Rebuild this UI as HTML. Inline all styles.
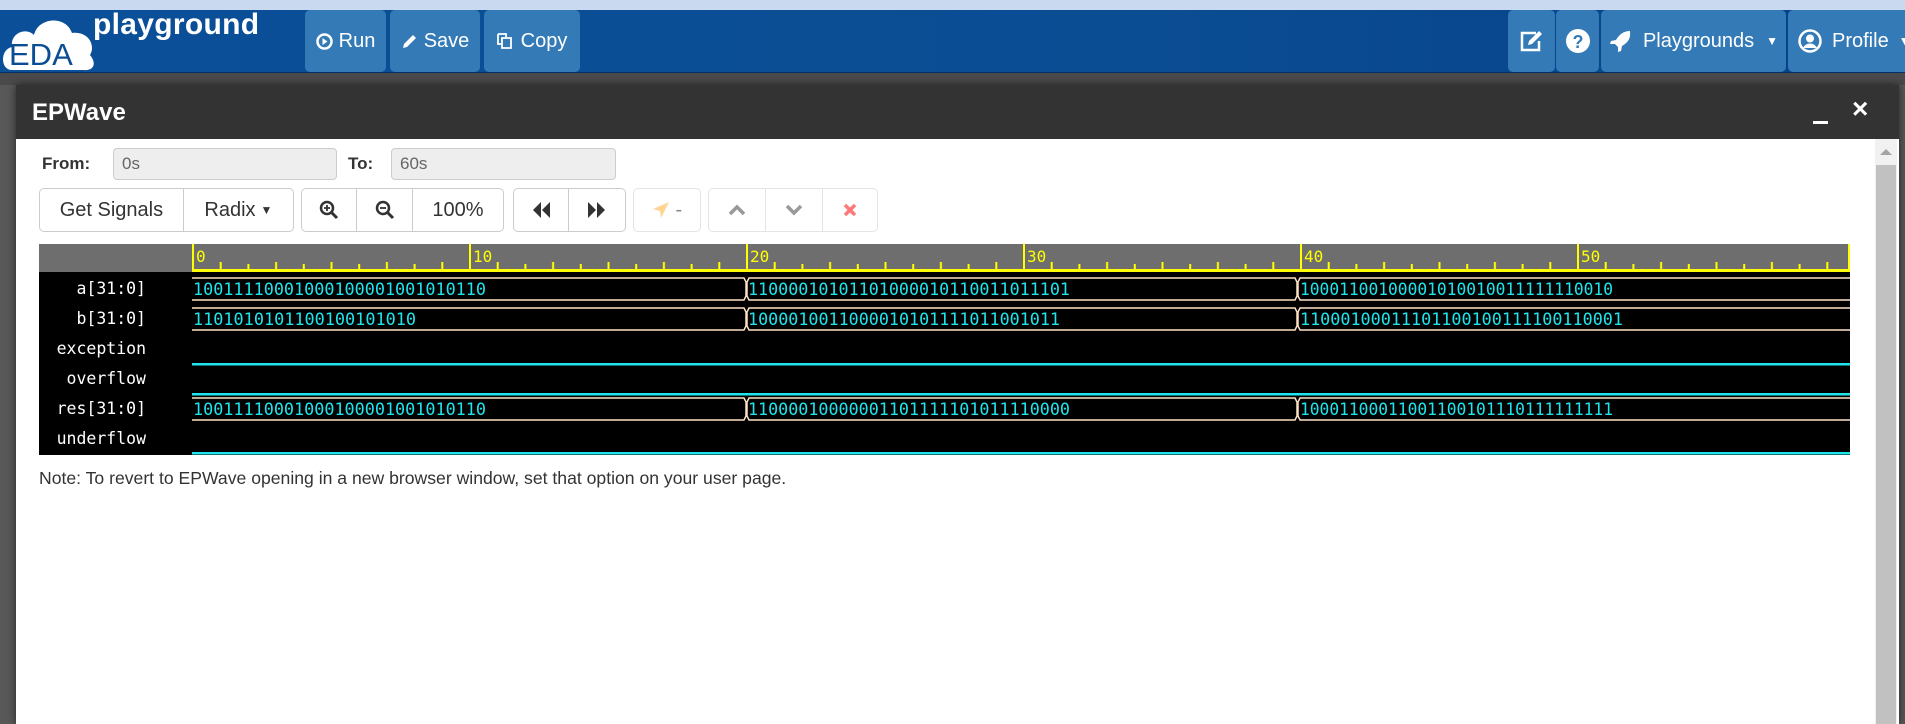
<!DOCTYPE html>
<html><head><meta charset="utf-8">
<style>
*{margin:0;padding:0;box-sizing:border-box}
body{width:1905px;height:724px;overflow:hidden;background:#585858;font-family:"Liberation Sans",sans-serif;position:relative}
.top{position:absolute;left:0;top:0;width:1905px;height:10px;background:#c9daf0}
.hdr{position:absolute;left:0;top:10px;width:1905px;height:63px;background:linear-gradient(90deg,#0a4f98,#0b4d93 60%,#064189);border-bottom:1px solid #03306a}
.nb{position:absolute;top:0;height:62px;background:#337ab7;border-radius:5px;color:#fff;font-size:20px;display:flex;align-items:center;justify-content:center;gap:6px}
.modal{position:absolute;left:16px;top:85px;width:1883px;height:639px;background:#fff;box-shadow:0 0 8px rgba(0,0,0,.6)}
.tbar{position:absolute;left:0;top:0;width:100%;height:54px;background:#333;color:#fff}
.lbl{position:absolute;font-weight:bold;font-size:17px;color:#333}
.inp{position:absolute;height:32px;background:#eee;border:1px solid #ccc;border-radius:4px;color:#666;font-size:17px;padding:5px 8px}
.grp{position:absolute;top:103px;height:44px;border:1px solid #ccc;border-radius:5px;display:flex;background:#fff}
.grp div{display:flex;align-items:center;justify-content:center;font-size:20px;color:#333;border-right:1px solid #ccc;height:100%}
.grp div:last-child{border-right:none}
.dis{border-color:#e4e4e4}.dis div{border-right-color:#e4e4e4}
</style></head><body>
<div class="top"></div>
<div class="hdr">
 <svg style="position:absolute;left:2px;top:1px" width="96" height="60" viewBox="0 0 96 60">
  <path d="M10 59 C-2 59 -2 38 10 36 C8 22 24 16 32 24 C36 6 64 4 70 22 C86 20 94 34 88 44 C96 54 90 60 82 59 Z" fill="#fff"/>
  <text x="7" y="54" font-family="Liberation Sans" font-size="31" fill="#0b4d93">EDA</text>
 </svg>
 <div style="position:absolute;left:93px;top:-2px;color:#fff;font-weight:bold;font-size:30px;letter-spacing:0.3px">playground</div>
 <div class="nb" style="left:305px;width:81px"><svg width="17" height="17"><circle cx="8.5" cy="8.5" r="7" fill="none" stroke="#fff" stroke-width="2.5"/><path d="M6.5 5v7l5-3.5z" fill="#fff"/></svg>Run</div>
 <div class="nb" style="left:390px;width:90px"><svg width="17" height="17"><path d="M2 15l1-4 9-9 3 3-9 9z" fill="#fff"/></svg>Save</div>
 <div class="nb" style="left:484px;width:96px"><svg width="18" height="18"><path d="M1 2h8v3M5 6h9v10H5z M1 2v10h4" fill="none" stroke="#fff" stroke-width="1.8"/></svg>Copy</div>
 <div class="nb" style="left:1508px;width:47px"><svg width="26" height="24"><path d="M17 4H3v17h17V12" fill="none" stroke="#fff" stroke-width="2.5"/><path d="M9 16l1-4 10-10 3 3-10 10z" fill="#fff"/></svg></div>
 <div class="nb" style="left:1556px;width:43px"><svg width="26" height="26"><circle cx="13" cy="13" r="12" fill="#fff"/><text x="13" y="20" text-anchor="middle" font-family="Liberation Sans" font-weight="bold" font-size="18" fill="#337ab7">?</text></svg></div>
 <div class="nb" style="left:1601px;width:185px;gap:12px"><svg width="22" height="22"><path d="M21 1c-7 0-11 4-14 9l-5 1-1 3 5 0 3 3 0 5 3-1 1-5c5-3 9-7 8-14z" fill="#fff"/></svg>Playgrounds <span style="font-size:12px">▼</span></div>
 <div class="nb" style="left:1788px;width:130px;justify-content:flex-start;padding-left:10px;gap:10px"><svg width="24" height="24"><circle cx="12" cy="12" r="10.5" fill="none" stroke="#fff" stroke-width="2.5"/><circle cx="12" cy="9.5" r="4" fill="#fff"/><path d="M5 19c3-6 11-6 14 0" fill="#fff"/></svg>Profile <span style="font-size:12px">▼</span></div>
</div>
<div style="position:absolute;left:0;top:73px;width:1905px;height:12px;background:#4a4a4a"></div>
<div class="modal">
 <div class="tbar">
  <div style="position:absolute;left:16px;top:14px;font-weight:bold;font-size:24px">EPWave</div>
  <div style="position:absolute;left:1797px;top:36px;width:15px;height:3px;background:#fff"></div>
  <div style="position:absolute;left:1836px;top:8px;font-size:28px;font-weight:bold">×</div>
 </div>
 <div style="position:absolute;left:1859px;top:54px;width:22px;height:585px;background:#f1f1f1"></div>
 <div style="position:absolute;left:1860px;top:80px;width:20px;height:559px;background:#c1c1c1"></div>
 <div style="position:absolute;left:1864px;top:64px;width:0;height:0;border-left:6px solid transparent;border-right:6px solid transparent;border-bottom:6px solid #a3a3a3"></div>
 <div class="lbl" style="left:26px;top:69px">From:</div>
 <div class="inp" style="left:97px;top:63px;width:224px">0s</div>
 <div class="lbl" style="left:332px;top:69px">To:</div>
 <div class="inp" style="left:375px;top:63px;width:225px">60s</div>
 <div class="grp" style="left:23px;width:255px"><div style="width:145px">Get Signals</div><div style="width:110px">Radix <span style="font-size:12px;margin-left:5px">▼</span></div></div>
 <div class="grp" style="left:285px;width:203px">
  <div style="width:56px"><svg width="20" height="20"><circle cx="8" cy="8" r="6" fill="none" stroke="#333" stroke-width="2.5"/><path d="M12 12l6 6" stroke="#333" stroke-width="3"/><path d="M5 8h6M8 5v6" stroke="#333" stroke-width="1.8"/></svg></div>
  <div style="width:56px"><svg width="20" height="20"><circle cx="8" cy="8" r="6" fill="none" stroke="#333" stroke-width="2.5"/><path d="M12 12l6 6" stroke="#333" stroke-width="3"/><path d="M5 8h6" stroke="#333" stroke-width="1.8"/></svg></div>
  <div style="width:91px">100%</div></div>
 <div class="grp" style="left:497px;width:113px">
  <div style="width:56px"><svg width="20" height="16"><path d="M10 0v16L2 8zM19 0v16L11 8z" fill="#333"/></svg></div>
  <div style="width:57px"><svg width="20" height="16"><path d="M1 0v16l8-8zM10 0v16l8-8z" fill="#333"/></svg></div></div>
 <div class="grp dis" style="left:617px;width:68px"><div style="width:68px;color:#888"><svg width="18" height="18"><path d="M17 1L1 8l7 2 1 7z" fill="#ffd591"/></svg>&nbsp;-</div></div>
 <div class="grp dis" style="left:692px;width:170px">
  <div style="width:58px"><svg width="18" height="12"><path d="M2 10l7-7 7 7" fill="none" stroke="#999" stroke-width="3.5"/></svg></div>
  <div style="width:57px"><svg width="18" height="12"><path d="M2 2l7 7 7-7" fill="none" stroke="#999" stroke-width="3.5"/></svg></div>
  <div style="width:55px"><svg width="14" height="14"><path d="M2 2l10 10M12 2L2 12" stroke="#f77" stroke-width="3.5"/></svg></div></div>
 <svg style="position:absolute;left:23px;top:159px" width="1811" height="211">
  <defs>
   <pattern id="tk" x="153" y="0" width="55.4" height="28" patternUnits="userSpaceOnUse">
    <rect x="27.7" y="18" width="2" height="8" fill="#ff0"/><rect x="0" y="20" width="2" height="6" fill="#ff0"/>
   </pattern>
  </defs>
  <rect x="0" y="0" width="1811" height="28" fill="#6e6e6e"/>
  <rect x="153" y="0" width="1658" height="28" fill="url(#tk)"/>
  <rect x="153" y="25" width="1658" height="3" fill="#ff0"/>
  <g fill="#ff0"><rect x="153" y="0" width="2" height="28"/><rect x="430" y="0" width="2" height="28"/><rect x="707" y="0" width="2" height="28"/><rect x="984" y="0" width="2" height="28"/><rect x="1261" y="0" width="2" height="28"/><rect x="1538" y="0" width="2" height="28"/><rect x="1809" y="0" width="2" height="28"/></g>
  <g font-family="DejaVu Sans Mono,Liberation Mono,monospace" font-size="16" fill="#ff0">
   <text x="157" y="18">0</text><text x="434" y="18">10</text><text x="711" y="18">20</text><text x="988" y="18">30</text><text x="1265" y="18">40</text><text x="1542" y="18">50</text></g>
  <rect x="0" y="28" width="1811" height="183" fill="#000"/>
  <g font-family="DejaVu Sans Mono,Liberation Mono,monospace" font-size="16.5" fill="#fff" text-anchor="end">
   <text x="107" y="50">a[31:0]</text><text x="107" y="80">b[31:0]</text><text x="107" y="110">exception</text><text x="107" y="140">overflow</text><text x="107" y="170">res[31:0]</text><text x="107" y="200">underflow</text></g>
  <g fill="none" stroke="#ffe2c6" stroke-width="1.5">
   <path d="M153 34H705L707 38V52L705 56H153M1811 34H1261L1259 38V52L1261 56H1811M710 34H1256L1258 38V52L1256 56H710L708 52V38Z"/>
   <path d="M153 64H705L707 68V82L705 86H153M1811 64H1261L1259 68V82L1261 86H1811M710 64H1256L1258 68V82L1256 86H710L708 82V68Z"/>
   <path d="M153 154H705L707 158V172L705 176H153M1811 154H1261L1259 158V172L1261 176H1811M710 154H1256L1258 158V172L1256 176H710L708 172V158Z"/>
  </g>
  <g fill="#1ee4ec"><rect x="153" y="119" width="1658" height="2.5"/><rect x="153" y="149" width="1658" height="2.5"/><rect x="153" y="208" width="1658" height="2.5"/></g>
  <g font-family="DejaVu Sans Mono,Liberation Mono,monospace" font-size="16.5" fill="#1ee4ec">
   <text x="154" y="51" textLength="293" lengthAdjust="spacingAndGlyphs">10011110001000100001001010110</text>
   <text x="709" y="51" textLength="322" lengthAdjust="spacingAndGlyphs">11000010101101000010110011011101</text>
   <text x="1261" y="51" textLength="313" lengthAdjust="spacingAndGlyphs">10001100100001010010011111110010</text>
   <text x="154" y="81" textLength="223" lengthAdjust="spacingAndGlyphs">1101010101100100101010</text>
   <text x="709" y="81" textLength="312" lengthAdjust="spacingAndGlyphs">1000010011000010101111011001011</text>
   <text x="1261" y="81" textLength="323" lengthAdjust="spacingAndGlyphs">11000100011101100100111100110001</text>
   <text x="154" y="171" textLength="293" lengthAdjust="spacingAndGlyphs">10011110001000100001001010110</text>
   <text x="709" y="171" textLength="322" lengthAdjust="spacingAndGlyphs">11000010000001101111101011110000</text>
   <text x="1261" y="171" textLength="313" lengthAdjust="spacingAndGlyphs">10001100011001100101110111111111</text>
  </g>
 </svg>
 <div style="position:absolute;left:23px;top:383px;font-size:17.6px;color:#333">Note: To revert to EPWave opening in a new browser window, set that option on your user page.</div>
</div>
</body></html>
